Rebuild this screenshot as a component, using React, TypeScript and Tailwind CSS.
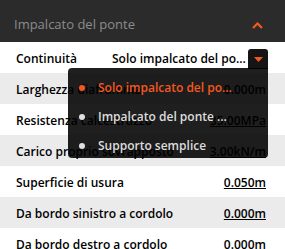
import React from "react";

type Row = { label: string; value: string; underline?: boolean };

const rows: Row[] = [
  { label: "Larghezza diaframma", value: "0.000m", underline: false },
  { label: "Resistenza calcestruzzo", value: "35.00MPa", underline: true },
  { label: "Carico proprio sovrapposto", value: "3.00kN/m", underline: true },
  { label: "Superficie di usura", value: "0.050m", underline: true },
  { label: "Da bordo sinistro a cordolo", value: "0.000m", underline: true },
  { label: "Da bordo destro a cordolo", value: "0.000m", underline: false },
];

const options = ["Solo impalcato del po...", "Impalcato del ponte ...", "Supporto semplice"];

export default function App() {
  return (
    <div className="w-[285px] h-[249px] overflow-hidden bg-white font-['Open_Sans',sans-serif] text-[12px]">
      <div className="h-[42px] bg-[#2b2b2b] flex items-center justify-between pl-[14px] pr-[22px] pt-[8px]">
        <span className="text-[13px] text-[#8c8c8c]">Impalcato del ponte</span>
        <svg width="11" height="7" viewBox="0 0 11 7">
          <path d="M1 6 L5.5 1.5 L10 6" stroke="#f4581f" strokeWidth="2.2" fill="none" />
        </svg>
      </div>

      <div className="relative h-[31px] flex items-center pl-[16px] pr-[17px] font-semibold text-black">
        <span className="w-[96px] pt-[3px]">Continuità</span>
        <span className="flex-1 pt-[3px]">Solo impalcato del po...</span>
        <div className="w-[20px] h-[20px] mt-[3px] bg-[#151515] rounded-t-[3px] flex items-center justify-center">
          <svg width="9" height="5" viewBox="0 0 9 5">
            <path d="M0 0 H9 L4.5 5 Z" fill="#f4581f" />
          </svg>
        </div>
        <div className="absolute left-[68px] top-[26px] w-[200px] h-[90px] bg-black/[0.88] rounded-[4px] rounded-tr-none z-10 pt-[5px]">
          {options.map((o, i) => (
            <div key={o} className="h-[29px] flex items-center pl-[11px] gap-[13px]">
              <span className={`w-[6px] h-[6px] rounded-full ${i === 0 ? "bg-[#f4581f]" : "bg-[#e0e0e0]"}`} />
              <span className={i === 0 ? "text-[#f4581f]" : "text-[#dcdcdc]"}>{o}</span>
            </div>
          ))}
        </div>
      </div>

      {rows.map((r, i) => (
        <div
          key={r.label}
          className={`h-[31px] flex items-center justify-between pl-[16px] pr-[19px] pt-[3px] font-semibold text-black ${i % 2 === 0 ? "bg-[#ebebeb]" : "bg-white"}`}
        >
          <span>{r.label}</span>
          <span className={r.underline ? "underline" : ""}>{r.value}</span>
        </div>
      ))}
    </div>
  );
}
